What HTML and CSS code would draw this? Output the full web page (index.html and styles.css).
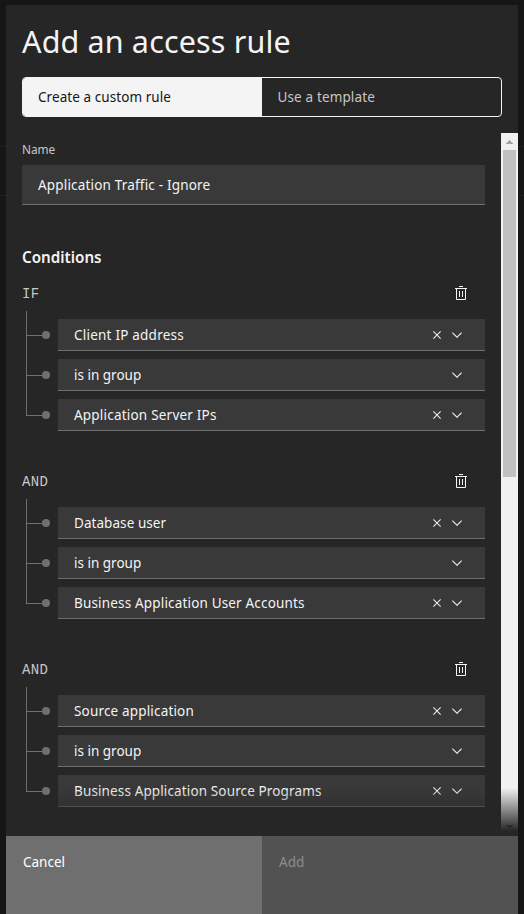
FILE: index.html
```html
<!DOCTYPE html>
<html lang="en">
<head>
<meta charset="utf-8">
<title>Add an access rule</title>
<link rel="stylesheet" href="styles.css">
</head>
<body>
<svg class="defs" width="0" height="0" aria-hidden="true">
  <symbol id="trash" viewBox="0 0 32 32"><path d="M12 12H14V24H12zM18 12H20V24H18zM4 6V8H6V28a2 2 0 002 2H24a2 2 0 002-2V8h2V6zM8 28V8H24V28zM12 2H20V4H12z"/></symbol>
  <symbol id="close" viewBox="0 0 32 32"><path d="M24 9.4L22.6 8 16 14.6 9.4 8 8 9.4 14.6 16 8 22.6 9.4 24 16 17.4 22.6 24 24 22.6 17.4 16z"/></symbol>
  <symbol id="chevron" viewBox="0 0 16 16"><path d="M8 11L3 6 3.7 5.3 8 9.6 12.3 5.3 13 6z"/></symbol>
</svg>
<div class="page">
<main class="panel">
  <header class="head">
    <h1 class="title">Add an access rule</h1>
    <div class="switcher">
      <div class="tab tab-on"><span class="t-create">Create a custom rule</span></div>
      <div class="tab"><span class="t-use">Use a template</span></div>
    </div>
  </header>
  <div class="body">
    <div class="form">
      <div class="label">Name</div>
      <div class="input"><span class="t-name">Application Traffic - Ignore</span></div>
      <h2 class="section">Conditions</h2>

      <section class="rule">
        <div class="rule-head"><span class="op">IF</span><svg class="icon trash"><use href="#trash"/></svg></div>
        <div class="rows">
          <div class="row"><i class="branch"></i><div class="select"><span class="text t-client">Client IP address</span><svg class="icon"><use href="#close"/></svg><svg class="icon"><use href="#chevron"/></svg></div></div>
          <div class="row"><i class="branch"></i><div class="select"><span class="text t-group">is in group</span><svg class="icon"><use href="#chevron"/></svg></div></div>
          <div class="row"><i class="branch"></i><div class="select"><span class="text t-server">Application Server IPs</span><svg class="icon"><use href="#close"/></svg><svg class="icon"><use href="#chevron"/></svg></div></div>
        </div>
      </section>

      <section class="rule">
        <div class="rule-head"><span class="op">AND</span><svg class="icon trash"><use href="#trash"/></svg></div>
        <div class="rows">
          <div class="row"><i class="branch"></i><div class="select"><span class="text t-db">Database user</span><svg class="icon"><use href="#close"/></svg><svg class="icon"><use href="#chevron"/></svg></div></div>
          <div class="row"><i class="branch"></i><div class="select"><span class="text t-group">is in group</span><svg class="icon"><use href="#chevron"/></svg></div></div>
          <div class="row"><i class="branch"></i><div class="select"><span class="text t-accounts">Business Application User Accounts</span><svg class="icon"><use href="#close"/></svg><svg class="icon"><use href="#chevron"/></svg></div></div>
        </div>
      </section>

      <section class="rule">
        <div class="rule-head"><span class="op">AND</span><svg class="icon trash"><use href="#trash"/></svg></div>
        <div class="rows">
          <div class="row"><i class="branch"></i><div class="select"><span class="text t-source">Source application</span><svg class="icon"><use href="#close"/></svg><svg class="icon"><use href="#chevron"/></svg></div></div>
          <div class="row"><i class="branch"></i><div class="select"><span class="text t-group">is in group</span><svg class="icon"><use href="#chevron"/></svg></div></div>
          <div class="row"><i class="branch"></i><div class="select"><span class="text t-programs">Business Application Source Programs</span><svg class="icon"><use href="#close"/></svg><svg class="icon"><use href="#chevron"/></svg></div></div>
        </div>
      </section>
    </div>
    <div class="scrollbar">
      <svg class="arrow" viewBox="0 0 17 17"><path fill="#a3a3a3" d="M8 7h1v1h1v1h1v1h1v1H5v-1h1V9h1V8h1z"/></svg>
      <div class="thumb"></div>
      <svg class="arrow arrow-down" viewBox="0 0 17 17"><path fill="#505050" d="M5 11h7v1h-1v1h-1v1H9v1H8v-1H7v-1H6v-1H5z"/></svg>
    </div>
    <div class="fade"></div>
  </div>
  <footer class="actions">
    <div class="btn cancel"><span class="t-cancel">Cancel</span></div>
    <div class="btn add"><span class="t-add">Add</span></div>
  </footer>
</main>
</div>
</body>
</html>
```
FILE: styles.css
```css
* { box-sizing: border-box; }
body {
  margin: 0;
  background: #161616;
  color: #f4f4f4;
  font: 13.5px/18px "Noto Sans", "Open Sans", sans-serif;
  white-space: nowrap;
}
.defs { position: absolute; }
.page {
  height: 914px;
  padding: 5px 6px 0;
  overflow: hidden;
  background: linear-gradient(#202020, #202020) 0 146px / 100% 1px no-repeat,
    linear-gradient(#202020, #202020) 0 195px / 100% 1px no-repeat, #161616;
}
.panel {
  height: 909px;
  display: flex;
  flex-direction: column;
  background: #262626;
}
.head { height: 128px; padding: 16px 16px 0; }
.title {
  margin: 0;
  height: 40px;
  font-size: 30.5px;
  line-height: 40px;
  font-weight: 400;
  letter-spacing: 0.15px;
}
.switcher {
  display: flex;
  width: 480px;
  height: 40px;
  margin-top: 16px;
  border: 1px solid #f4f4f4;
  border-radius: 4px;
  overflow: hidden;
}
.tab { flex: 1; padding: 10px 0 0 16px; color: #c6c6c6; }
.tab-on { padding-left: 15px; background: #f4f4f4; color: #161616; }
.body {
  position: relative;
  flex: none;
  height: 698px;
  display: flex;
  overflow: hidden;
}
.form { width: 495px; padding: 8px 16px 0; }
.label { height: 24px; font-size: 11.8px; line-height: 16px; color: #c6c6c6; }
.input {
  height: 40px;
  padding: 11px 16px 0;
  background: #393939;
  border-bottom: 1px solid #6f6f6f;
}
.section {
  margin: 41px 0 17px;
  font-size: 15.2px;
  line-height: 22px;
  font-weight: 600;
}
.rule { height: 138px; margin-bottom: 50px; }
.rule-head {
  display: flex;
  align-items: center;
  justify-content: space-between;
  height: 18px;
  margin-bottom: 8px;
  padding-right: 16px;
}
.trash { margin-bottom: 2px; }
.op {
  font-family: "Liberation Mono", monospace;
  font-size: 14px;
  letter-spacing: 0.4px;
  color: #c6c6c6;
}
.rows { display: flex; flex-direction: column; gap: 8px; padding-top: 8px; height: 120px; }
.row { display: flex; height: 32px; flex: none; }
.branch { position: relative; width: 36px; }
.branch::before {
  content: "";
  position: absolute;
  left: 4px;
  top: -24px;
  width: 17px;
  height: 40px;
  border: solid #6f6f6f;
  border-width: 0 0 1px 1px;
}
.row:first-child .branch::before { top: -8px; height: 24px; }
.branch::after {
  content: "";
  position: absolute;
  left: 20px;
  top: 12px;
  width: 8px;
  height: 8px;
  border-radius: 50%;
  background: #6f6f6f;
}
.select {
  flex: 1;
  display: flex;
  align-items: center;
  gap: 4px;
  padding: 1px 20px 0 16px;
  background: #393939;
  border-bottom: 1px solid #6f6f6f;
}
.text { flex: 1; }
.t-create { letter-spacing: 0.07px; }
.t-use { letter-spacing: 0.14px; }
.t-name { letter-spacing: 0.18px; }
.t-client { letter-spacing: 0.22px; }
.t-server { letter-spacing: 0.21px; }
.t-db { letter-spacing: 0.06px; }
.t-accounts { letter-spacing: 0.17px; }
.t-source { letter-spacing: 0.17px; }
.t-programs { letter-spacing: 0.13px; }
.icon { width: 16px; height: 16px; fill: #f4f4f4; flex: none; }
.scrollbar {
  width: 17px;
  background: #f1f1f1;
  display: flex;
  flex-direction: column;
  align-items: center;
}
.arrow { width: 17px; height: 17px; flex: none; }
.arrow-down { margin-top: auto; }
.thumb { width: 13px; height: 327px; background: #c1c1c1; }
.fade {
  position: absolute;
  left: 52px;
  right: 0;
  bottom: 0;
  height: 43px;
  background: linear-gradient(rgba(38, 38, 38, 0), #262626);
}
.actions { display: flex; height: 78px; margin-top: 5px; }
.btn { flex: 1; padding: 17px 0 0 17px; }
.cancel { background: #6f6f6f; color: #fff; }
.add { background: #525252; color: #8d8d8d; }
```
